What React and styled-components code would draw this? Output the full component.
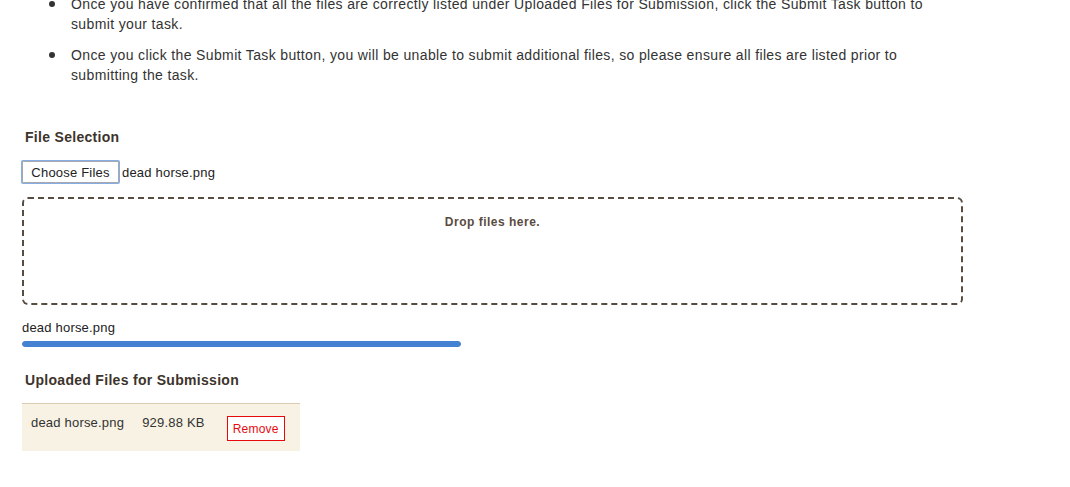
import React from "react"
import styled, { createGlobalStyle } from "styled-components"

const GlobalStyle = createGlobalStyle`
  body {
    margin: 0;
    background: #fff;
    font-family: "Liberation Sans", Arial, sans-serif;
    color: #333;
  }
`

const Page = styled.div`
  width: 941px;
  padding-left: 22px;
  padding-bottom: 36px;
`

const Notes = styled.ul`
  margin: -6px 0 0;
  padding-left: 49px;
  list-style: none;
  font-size: 14px;
  line-height: 20px;
  letter-spacing: 0.36px;
  color: #333;

  li {
    position: relative;
    margin-bottom: 11px;
  }
  li::before {
    content: "";
    position: absolute;
    left: -22px;
    top: 7px;
    width: 6px;
    height: 6px;
    border-radius: 50%;
    background: #333;
  }
  li:last-child {
    margin-bottom: 0;
  }
`

const Heading = styled.h3`
  margin: ${p => p.$top}px 0 0 3px;
  font-size: 14px;
  line-height: 20px;
  font-weight: bold;
  letter-spacing: 0.3px;
  color: #3d342b;
`

const PickerRow = styled.div`
  display: flex;
  align-items: center;
  gap: 3px;
  margin-top: 14px;
  font-size: 13px;
  letter-spacing: 0.2px;
  color: #222;
`

const ChooseButton = styled.button`
  height: 22px;
  width: 97px;
  padding: 0;
  margin: 0;
  border: 1px solid #a9a9a9;
  box-shadow: inset 0 0 0 1px #fff, 0 0 0 1px #86aee6;
  background: #fff;
  font-family: "Liberation Sans", Arial, sans-serif;
  font-size: 13px;
  letter-spacing: 0.2px;
  color: #222;
  border-radius: 1px;
`

const DropZone = styled.div`
  margin-top: 14px;
  border: 2px dashed #584b40;
  border-radius: 6px;
  padding-top: 15px;
  height: 89px;
  text-align: center;
  font-size: 12px;
  line-height: 16px;
  font-weight: bold;
  letter-spacing: 0.5px;
  color: #5a4b3f;
`

const FileName = styled.div`
  margin-top: 15px;
  font-size: 13px;
  line-height: 16px;
  letter-spacing: 0.2px;
  color: #222;
`

const Progress = styled.div`
  margin-top: 5px;
  width: 439px;
  height: 6px;
  border-radius: 3px;
  background: #e5e5e5;
  overflow: hidden;
`

const ProgressFill = styled.div`
  height: 100%;
  background: #4581d3;
  border-radius: 3px;
`

const UploadRow = styled.div`
  margin-top: 13px;
  width: 278px;
  box-sizing: border-box;
  display: flex;
  align-items: flex-start;
  padding: 11px 0 10px 9px;
  background: #f7f2e3;
  border-top: 1px solid #dccdb2;
  font-size: 13px;
  line-height: 16px;
  letter-spacing: 0.2px;
  color: #333;
`

const Cell = styled.span`
  margin-right: ${p => p.$gap}px;
`

const RemoveButton = styled.button`
  margin-top: 1px;
  width: 58px;
  height: 25px;
  padding: 0;
  background: #fff;
  border: 1px solid #e8090d;
  color: #e8090d;
  font-family: "Liberation Sans", Arial, sans-serif;
  font-size: 12px;
  letter-spacing: 0.2px;
`

const files = [{ name: "dead horse.png", size: "929.88 KB", progress: 100 }]

export default function App() {
  return (
    <>
      <GlobalStyle />
      <Page>
        <Notes>
          <li>
            Once you have confirmed that all the files are correctly listed under Uploaded Files for
            Submission, click the Submit Task button to submit your task.
          </li>
          <li>
            Once you click the Submit Task button, you will be unable to submit additional files, so
            please ensure all files are listed prior to submitting the task.
          </li>
        </Notes>

        <Heading $top={42}>File Selection</Heading>
        <PickerRow>
          <ChooseButton>Choose Files</ChooseButton>
          <span>dead horse.png</span>
        </PickerRow>
        <DropZone>Drop files here.</DropZone>

        {files.map(f => (
          <div key={f.name}>
            <FileName>{f.name}</FileName>
            <Progress>
              <ProgressFill style={{ width: `${f.progress}%` }} />
            </Progress>
          </div>
        ))}

        <Heading $top={23}>Uploaded Files for Submission</Heading>
        {files.map(f => (
          <UploadRow key={f.name}>
            <Cell $gap={18}>{f.name}</Cell>
            <Cell $gap={22}>{f.size}</Cell>
            <RemoveButton>Remove</RemoveButton>
          </UploadRow>
        ))}
      </Page>
    </>
  )
}
